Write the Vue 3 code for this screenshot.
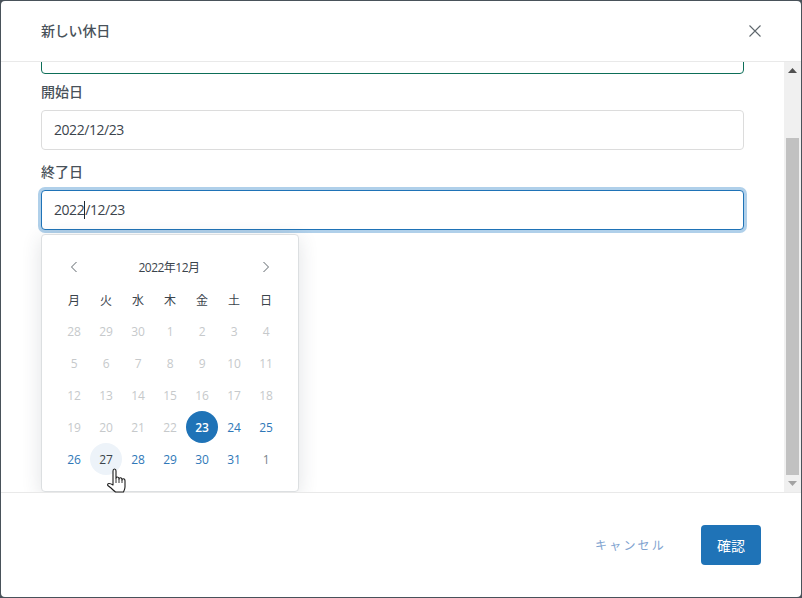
<script setup>
const weekdays = ['月', '火', '水', '木', '金', '土', '日']

// calendar cells for december 2022, monday first
const days = [
  ...[28, 29, 30].map(n => ({ n, kind: 'off' })),
  ...Array.from({ length: 22 }, (_, i) => ({ n: i + 1, kind: 'off' })),
  ...Array.from({ length: 9 }, (_, i) => ({ n: i + 23, kind: 'on' })),
  { n: 1, kind: 'next' }
]

function dayClass(d) {
  return {
    'day--off': d.kind === 'off',
    'day--on': d.kind === 'on',
    'day--next': d.kind === 'next',
    'day--selected': d.kind === 'on' && d.n === 23,
    'day--hover': d.kind === 'on' && d.n === 27
  }
}
</script>

<template>
  <div class="frame">
    <div class="modal">
      <header class="modal__head">
        <h1 class="modal__title">新しい休日</h1>
        <svg class="modal__close" width="14" height="14" viewBox="0 0 14 14">
          <path d="M1.5 1.5L12.5 12.5M12.5 1.5L1.5 12.5" stroke="#5f676d" stroke-width="1.1" fill="none" />
        </svg>
      </header>

      <div class="modal__body">
        <div class="scroller">
          <div class="input input--name"></div>

          <div class="field">
            <label class="field__label">開始日</label>
            <div class="input">2022/12/23</div>
          </div>

          <div class="field field--open">
            <label class="field__label">終了日</label>
            <div class="input input--focus">2022<span class="caret"></span>/12/23</div>

            <div class="picker">
              <div class="picker__head">
                <svg width="8" height="12" viewBox="0 0 8 12">
                  <path d="M6.5 1L1.5 6L6.5 11" stroke="#5f676d" stroke-width="1" fill="none" />
                </svg>
                <span class="picker__month">2022年12月</span>
                <svg width="8" height="12" viewBox="0 0 8 12">
                  <path d="M1.5 1L6.5 6L1.5 11" stroke="#5f676d" stroke-width="1" fill="none" />
                </svg>
              </div>
              <div class="picker__grid">
                <div v-for="w in weekdays" :key="w" class="weekday">{{ w }}</div>
                <div v-for="(d, i) in days" :key="i" class="day" :class="dayClass(d)">{{ d.n }}</div>
              </div>
            </div>
          </div>
        </div>

        <div class="scrollbar">
          <svg class="scrollbar__arrow" width="9" height="5" viewBox="0 0 9 5"><path d="M4.5 0L9 5H0Z" fill="#505050" /></svg>
          <div class="scrollbar__track"><div class="scrollbar__thumb"></div></div>
          <svg class="scrollbar__arrow" width="9" height="5" viewBox="0 0 9 5"><path d="M0 0H9L4.5 5Z" fill="#a3a3a3" /></svg>
        </div>
      </div>

      <footer class="modal__foot">
        <button class="btn btn--ghost">キャンセル</button>
        <button class="btn btn--primary">確認</button>
      </footer>

      <svg class="pointer" width="22" height="27" viewBox="0 0 22 27">
        <path
          d="M6 17V3Q6 1 7.5 1T9 3V10Q9 9 10.5 9T12 11Q12 9.8 13.5 9.8T15 12Q15 10.8 16.5 10.8T18 13V19Q18 21 16.5 24H8.5Q6 22 4 20L0.8 17.5Q0.2 15.5 2 15.5T6 17Z"
          fill="#fff" stroke="#1c1c1c" stroke-width="1.1" stroke-linejoin="round"
        />
        <path d="M9 10V15M12 11V15M15 12V15" stroke="#1c1c1c" stroke-width="0.9" fill="none" />
      </svg>
    </div>
  </div>
</template>

<style>
  html, body {
    margin: 0;
    overflow: hidden;
    background: #49525a;
  }
</style>

<style scoped>
  .frame {
    width: 802px;
    height: 598px;
    box-sizing: border-box;
    padding: 1px 1px 1px 1px;
    background: #49525a;
    font-family: "Open Sans", "Noto Sans CJK JP", sans-serif;
    font-size: 14px;
    color: #3b444c;
  }

  .modal {
    position: relative;
    height: 100%;
    display: flex;
    flex-direction: column;
    background: #fff;
    border-radius: 4px;
    overflow: hidden;
  }

  .modal__head {
    height: 60px;
    flex: none;
    display: flex;
    align-items: center;
    justify-content: space-between;
    padding: 0 40px;
    border-bottom: 1px solid #e9e9e9;
  }

  .modal__title {
    margin: 0 0 2px;
    font-size: 14px;
    font-weight: 500;
    letter-spacing: -0.2px;
    color: #49525a;
  }

  .modal__close {
    margin-right: -1px;
  }

  .modal__body {
    flex: 1;
    min-height: 0;
    display: flex;
  }

  .scroller {
    flex: 1;
    min-width: 0;
    padding: 0 40px 0 40px;
    overflow: hidden;
  }

  .scrollbar {
    width: 17px;
    flex: none;
    background: #f0f0f0;
    display: flex;
    flex-direction: column;
    align-items: center;
    padding: 6px 0;
    box-sizing: border-box;
  }

  .scrollbar__arrow {
    flex: none;
  }

  .scrollbar__track {
    flex: 1;
    width: 100%;
    padding-top: 65px;
    padding-bottom: 6px;
    box-sizing: border-box;
    display: flex;
    justify-content: center;
  }

  .scrollbar__thumb {
    width: 13px;
    background: #c1c1c1;
  }

  .input {
    height: 40px;
    box-sizing: border-box;
    border: 1px solid #dcdcdc;
    border-radius: 4px;
    padding: 0 12px 2px;
    display: flex;
    align-items: center;
    background: #fff;
    letter-spacing: -0.45px;
  }

  .input--name {
    margin-top: -28px;
    margin-bottom: 8px;
    border-color: #0d6e58;
  }

  .input--focus {
    border-color: #1f73b7;
    box-shadow: 0 0 0 3px #b0d0ea;
  }

  .caret {
    width: 1px;
    height: 18px;
    margin-top: 2px;
    background: #1c2830;
  }

  .field {
    margin-bottom: 12px;
  }

  .field--open {
    position: relative;
  }

  .field__label {
    display: block;
    height: 20px;
    line-height: 19px;
    margin-bottom: 8px;
    font-weight: 500;
    color: #49525a;
  }

  .picker {
    position: absolute;
    top: 72px;
    left: 0;
    width: 258px;
    height: 258px;
    box-sizing: border-box;
    padding: 16px;
    background: #fff;
    border: 1px solid #dcdfe1;
    border-radius: 4px;
    box-shadow: 0 4px 20px rgba(40, 60, 70, 0.14);
    font-size: 12px;
    letter-spacing: -0.2px;
  }

  .picker__head {
    height: 32px;
    display: flex;
    align-items: center;
    justify-content: space-between;
    padding: 0 12px;
  }

  .picker__month {
    font-size: 12px;
    letter-spacing: -0.5px;
    margin-right: 2px;
  }

  .picker__grid {
    display: grid;
    grid-template-columns: repeat(7, 32px);
    grid-auto-rows: 32px;
  }

  .weekday,
  .day {
    display: flex;
    align-items: center;
    justify-content: center;
    border-radius: 50%;
  }

  .weekday {
    padding-top: 2px;
    box-sizing: border-box;
  }

  .day--off {
    color: #c6c9cb;
  }

  .day--on {
    color: #2f78b8;
  }

  .day--next {
    color: #7c858b;
  }

  .day--selected {
    background: #1f73b7;
    color: #fff;
    font-weight: 600;
  }

  .day--hover {
    background: #edf3f9;
    color: #3b444c;
  }

  .modal__foot {
    height: 105px;
    flex: none;
    box-sizing: border-box;
    border-top: 1px solid #e9e9e9;
    display: flex;
    align-items: center;
    justify-content: flex-end;
    gap: 21px;
    padding: 0 40px;
  }

  .btn {
    font: inherit;
    border: 0;
    border-radius: 4px;
    height: 40px;
    background: none;
  }

  .btn--ghost {
    color: #7fa3d0;
    font-size: 12px;
    letter-spacing: 2.2px;
    padding: 0 14px 0 16px;
  }

  .btn--primary {
    width: 60px;
    padding: 0;
    background: #1f73b7;
    color: #fff;
  }

  .pointer {
    position: absolute;
    left: 106px;
    top: 467px;
  }
</style>
